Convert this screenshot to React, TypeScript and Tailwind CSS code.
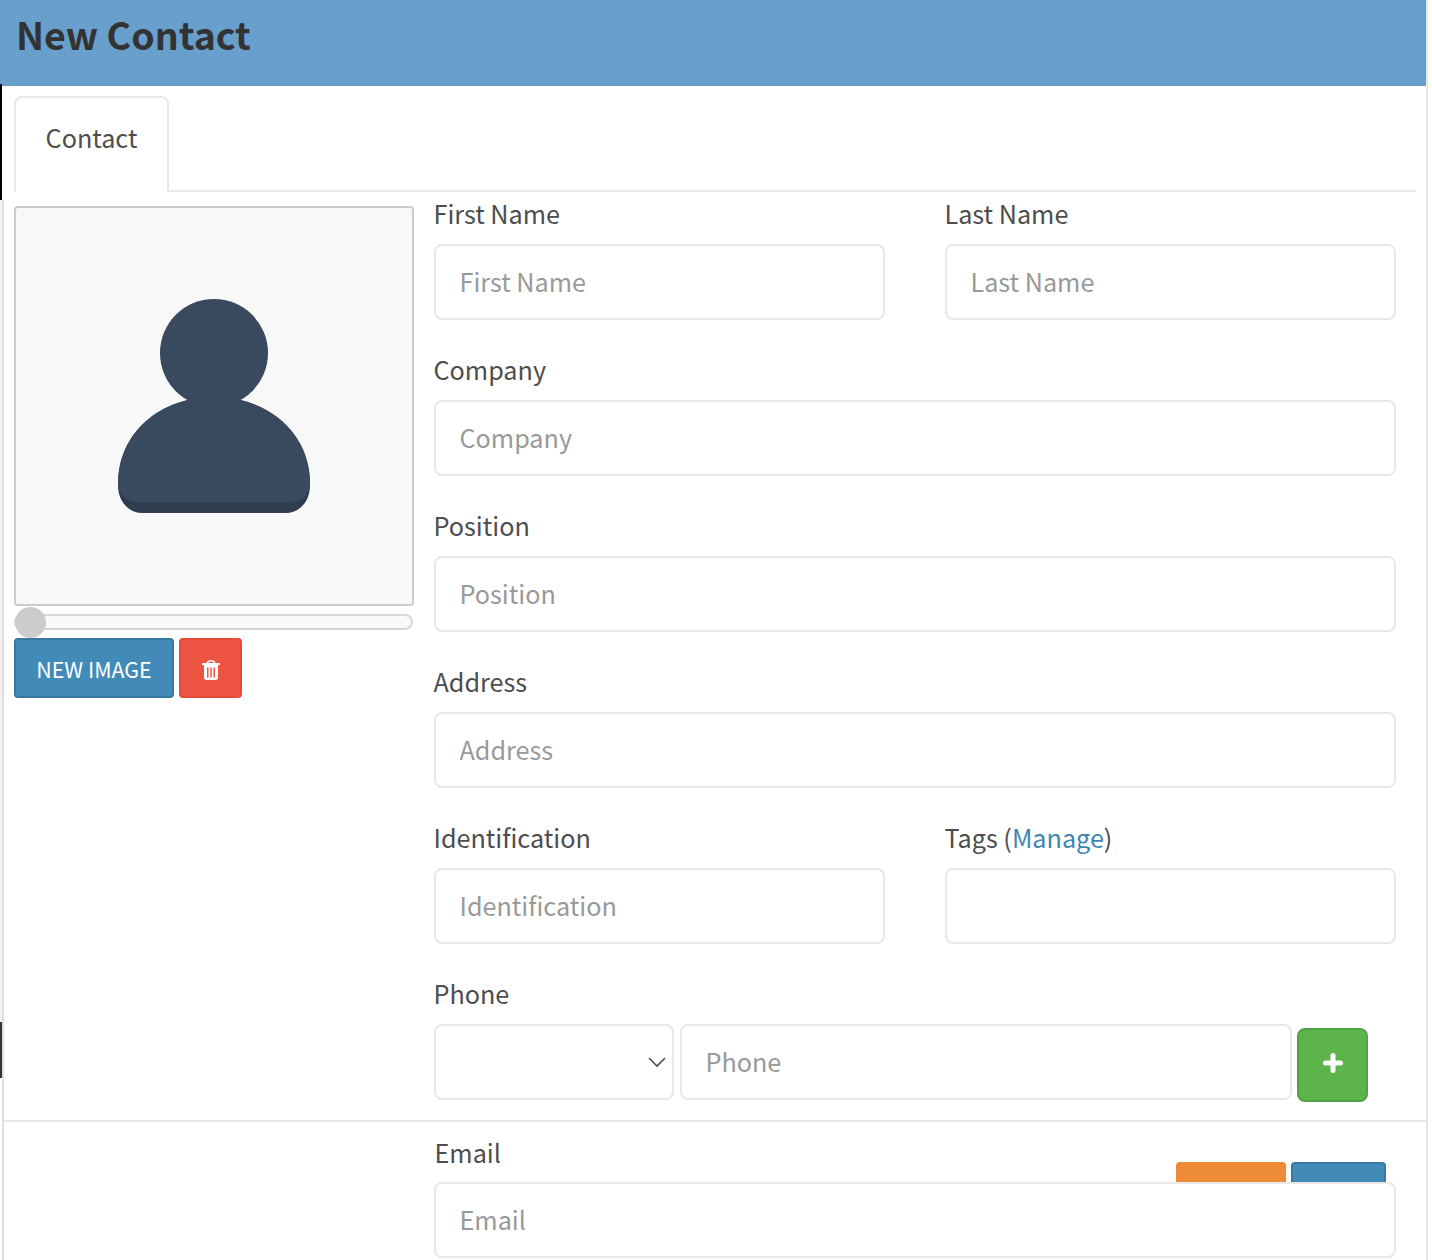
import React from "react";

const font = { fontFamily: '"Noto Sans CJK SC", "Noto Sans", sans-serif' };

function Field({ label, placeholder, className = "" }: { label: React.ReactNode; placeholder?: string; className?: string }) {
  return (
    <div className={className}>
      <label className="-ml-[0.5px] flex h-[52px] items-center pb-[9px] text-[25.2px] leading-none text-[#4d4d4d]">{label}</label>
      <input
        placeholder={placeholder}
        className="block h-[76px] w-full rounded-lg border-2 border-[#e8e8e8] bg-white px-[23.5px] pb-[2px] text-[25.2px] text-[#4d4d4d] outline-none placeholder:text-[#999999]"
      />
    </div>
  );
}

function Person() {
  return (
    <svg width="192" height="216" viewBox="0 0 192 216" aria-hidden="true">
      <circle cx="96" cy="54" r="54" fill="#3a4a5e" />
      <path d="M0 186C0 134 42 98 96 98C150 98 192 134 192 186C192 204 180 214 168 214H24C12 214 0 204 0 186Z" fill="#2f3d4f" />
      <path d="M0 184C0 134 42 98 96 98C150 98 192 134 192 184C192 196 183 203 172 203H20C9 203 0 196 0 184Z" fill="#3a4a5e" />
    </svg>
  );
}

function Trash() {
  return (
    <svg width="18" height="20" viewBox="0 0 18 20" aria-hidden="true">
      <path d="M5.2 3.6C5.6 1.8 6.4 1 7.6 1H10.4C11.6 1 12.4 1.8 12.8 3.6" fill="none" stroke="#ffffff" strokeWidth="1.7" />
      <rect x="0" y="3" width="18" height="2.2" rx="0.8" fill="#ffffff" />
      <path d="M2 5H16V17.5C16 19 15 20 13.6 20H4.4C3 20 2 19 2 17.5Z" fill="#ffffff" />
      <rect x="5" y="7.5" width="1.5" height="10" fill="#ec5340" />
      <rect x="8.25" y="7.5" width="1.5" height="10" fill="#ec5340" />
      <rect x="11.5" y="7.5" width="1.5" height="10" fill="#ec5340" />
    </svg>
  );
}

function Plus() {
  return (
    <svg width="20" height="20" viewBox="0 0 20 20" aria-hidden="true">
      <path d="M10 2.5V17.5M2.5 10H17.5" stroke="#ffffff" strokeWidth="5" strokeLinecap="round" />
    </svg>
  );
}

export default function App() {
  return (
    <div style={font} className="relative h-[1260px] w-[1432px] overflow-hidden bg-white">
      <header className="flex h-[86px] w-[1426px] items-start bg-[#689fcd] pl-[16px] pt-[9px]">
        <h1 className="text-[37.5px] font-bold leading-[50px] text-[#333333]">New Contact</h1>
      </header>

      <div className="absolute left-0 top-[84px] h-[116px] w-[2px] bg-black" />
      <div className="absolute left-0 top-[200px] h-[822px] w-[2px] bg-[#f2f2f2]" />
      <div className="absolute left-0 top-[1022px] h-[56px] w-[2px] bg-[#333333]" />
      <div className="absolute left-[2px] top-[200px] h-[1060px] w-[2px] bg-[#dfdfdf]" />
      <div className="absolute left-[1426px] top-0 h-[1260px] w-[2px] bg-[#e6e6e6]" />

      <div className="absolute left-[4px] right-[6px] top-[1120px] h-[140px] border-t-2 border-[#e6e6e6]">
        <div className="flex justify-end gap-[5px] pr-[40px] pt-[40px]">
          <div className="h-[60px] w-[110px] rounded border-2 border-[#ed8a35] bg-[#ee8b38]" />
          <div className="h-[60px] w-[95px] rounded border-2 border-[#38799f] bg-[#428bb8]" />
        </div>
      </div>

      <main className="relative pl-[14px] pr-[16px] pt-[10px]">
        <div className="flex h-[96px] border-b-2 border-[#e8e8e8]">
          <div className="-mb-[2px] flex h-[96px] w-[155px] justify-center rounded-t-lg border-2 border-b-0 border-[#e8e8e8] bg-white pt-[19px] text-[25.2px] leading-[40px] text-[#4d4d4d]">
            Contact
          </div>
        </div>

        <div className="flex items-start">
          <aside className="mt-[14px] w-[400px] shrink-0">
            <div className="flex h-[400px] w-[400px] items-center justify-center rounded border-2 border-[#cccccc] bg-[#f8f8f8] pt-[2px]">
              <Person />
            </div>
            <div className="relative mt-[8px] h-[16px] w-[399px] rounded-lg border-2 border-[#d6d6d6] bg-[#f9f9f9]">
              <div className="absolute -left-px -top-[9px] h-[31px] w-[31px] rounded-full bg-[#cccccc]" />
            </div>
            <div className="mt-[8px] flex gap-[5px]">
              <button className="h-[60px] w-[160px] rounded border-2 border-[#38799f] bg-[#428bb8] pt-[3px] text-[21.4px] text-white">NEW IMAGE</button>
              <button className="flex h-[60px] w-[63px] items-center justify-center rounded border-2 border-[#e8493a] bg-[#ec5340] pt-[3px]">
                <Trash />
              </button>
            </div>
          </aside>

          <form className="ml-[20px] w-[962px]">
            <div className="grid grid-cols-[451px_451px] gap-x-[60px]">
              <Field label="First Name" placeholder="First Name" />
              <Field label="Last Name" placeholder="Last Name" />
            </div>
            <Field className="mt-[28px]" label="Company" placeholder="Company" />
            <Field className="mt-[28px]" label="Position" placeholder="Position" />
            <Field className="mt-[28px]" label="Address" placeholder="Address" />
            <div className="mt-[28px] grid grid-cols-[451px_451px] gap-x-[60px]">
              <Field label="Identification" placeholder="Identification" />
              <Field
                label={
                  <span>
                    Tags (<span className="text-[#3e87b3]">Manage</span>)
                  </span>
                }
              />
            </div>
            <div className="mt-[28px]">
              <label className="-ml-[0.5px] flex h-[52px] items-center pb-[9px] text-[25.2px] leading-none text-[#4d4d4d]">Phone</label>
              <div className="flex items-start">
                <div className="relative h-[76px] w-[240px]">
                  <select className="h-full w-full appearance-none rounded-lg border-2 border-[#e8e8e8] bg-white outline-none" />
                  <svg className="absolute right-[8px] top-[32px]" width="18" height="12" viewBox="0 0 18 12" fill="none" aria-hidden="true">
                    <path d="M1 2L9 10L17 2" stroke="#4d4d4d" strokeWidth="1.6" />
                  </svg>
                </div>
                <input
                  placeholder="Phone"
                  className="ml-[6px] block h-[76px] w-[612px] rounded-lg border-2 border-[#e8e8e8] bg-white px-[23.5px] pb-[2px] text-[25.2px] outline-none placeholder:text-[#999999]"
                />
                <button className="ml-[5px] mt-[4px] flex h-[74px] w-[71px] items-center justify-center rounded-lg border-2 border-[#50a344] bg-[#5cb44a] pb-[4px]">
                  <Plus />
                </button>
              </div>
            </div>
            <Field
              className="mt-[28px]"
              label={<span className="relative left-px top-px">Email</span>}
              placeholder="Email"
            />
          </form>
        </div>
      </main>
    </div>
  );
}
